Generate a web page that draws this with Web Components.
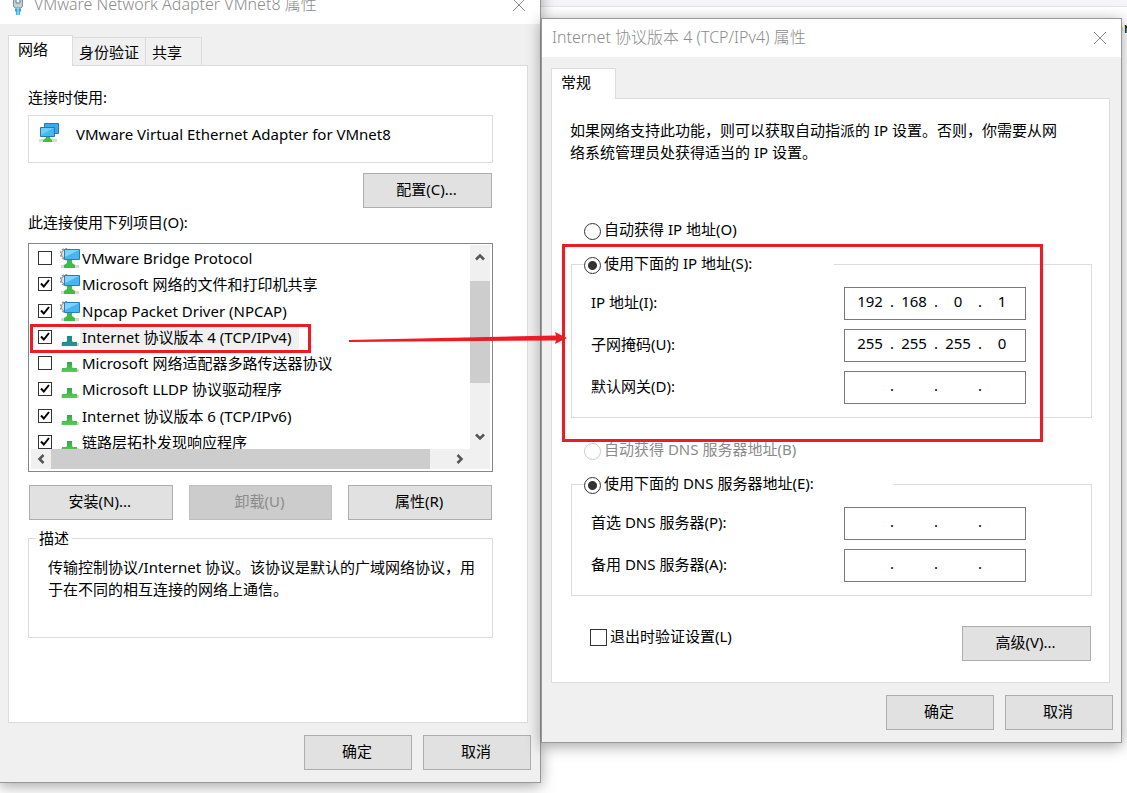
<!DOCTYPE html>
<html lang="zh-CN">
<head>
<meta charset="utf-8">
<title>Internet 协议版本 4 (TCP/IPv4) 属性</title>
<style>
  body {
    margin: 0;
    background: #fff;
    color: #000;
    font: 15px/22px "Noto Sans", "Noto Sans CJK SC", sans-serif;
  }
</style>
</head>
<body>
<desk-top>
  <dialog-window class="adapter" heading="VMware Network Adapter VMnet8 属性">
    <net-icon slot="icon" kind="plug"></net-icon>
    <tab-strip slot="tabs" tabs="网络,身份验证,共享"></tab-strip>
    <adapter-page></adapter-page>
    <push-button slot="footer">确定</push-button>
    <push-button slot="footer">取消</push-button>
  </dialog-window>

  <dialog-window class="protocol" heading="Internet 协议版本 4 (TCP/IPv4) 属性">
    <tab-strip slot="tabs" tabs="常规"></tab-strip>
    <protocol-page></protocol-page>
    <push-button slot="footer">确定</push-button>
    <push-button slot="footer">取消</push-button>
  </dialog-window>

  <mark-box slot="marks" class="item"></mark-box>
  <mark-box slot="marks" class="address"></mark-box>
  <mark-arrow slot="marks"></mark-arrow>
</desk-top>

<script>
{
  /** Registers an element whose shadow root is filled from a template. */
  const define = (name, html, setup) => {
    const template = document.createElement("template");
    template.innerHTML = html;

    window.customElements.define(name, class extends HTMLElement {
      constructor () {
        super();
        this.attachShadow({ mode: "open" });
        this.shadowRoot.appendChild(template.content.cloneNode(true));
      }

      connectedCallback () {
        if (setup && !this.ready) {
          this.ready = true;
          setup(this, this.shadowRoot);
        }
      }
    });
  };



  define("desk-top", `
    <style>
      :host {
        display: block;
        position: relative;
        min-height: 100vh;
        overflow: hidden;
      }

      .bar {
        position: absolute;
        inset: 0 0 auto 0;
        height: 6px;
        background: #f4f5f8;
        border-bottom: 1px solid #e5e5e5;
      }

      .windows {
        display: grid;
        grid-template-columns: 542fr 581fr;
        align-items: start;
        margin: 0 5px 0 -1px;
      }

      .code {
        position: absolute;
        font-family: "Liberation Mono", monospace;
        left: calc(100% - 13px);
        top: 19px;
      }

      ::slotted(.adapter) {
        margin-top: -15px;
        --body-padding: 11px 12px 12px 8px;
        --page-padding: 20px 34px 84px 19px;
      }

      ::slotted(.protocol) {
        margin-top: 18px;
      }

      ::slotted(.item) {
        left: 30px;
        top: 324px;
        width: 281px;
        height: 29px;
      }

      ::slotted(.address) {
        left: 562px;
        top: 244px;
        width: 481px;
        height: 198px;
      }

      ::slotted(mark-arrow) {
        left: 348px;
        top: 330px;
      }
    </style>
    <div class="bar"></div>
    <span class="code">or</span>
    <div class="windows"><slot></slot></div>
    <slot name="marks"></slot>
  `);



  define("dialog-window", `
    <style>
      :host {
        display: block;
        position: relative;
        background: #f0f0f0;
        border: 1px solid #989898;
        box-shadow: 0 3px 14px rgba(0, 0, 0, 0.36);
      }

      header {
        display: flex;
        align-items: center;
        gap: 8px;
        height: 38px;
        padding: 0 14px 0 10px;
        background: #fff;
        color: #8c8c8c;
      }

      h1 {
        flex: 1;
        margin: 0;
        padding-bottom: 2px;
        font-size: 16px;
        font-weight: 300;
      }

      header button {
        display: flex;
        padding: 0;
        border: 0;
        background: none;
      }

      header svg {
        width: 14px;
        height: 14px;
      }

      .body {
        padding: var(--body-padding, 11px 11px 12px 9px);
      }

      .page {
        padding: var(--page-padding, 20px 17px 21px 18px);
        border: 1px solid #dcdcdc;
        background: #fff;
      }

      footer {
        display: flex;
        justify-content: flex-end;
        gap: 11px;
        margin-top: 12px;
        margin-right: -3px;
        --button-width: 108px;
      }
    </style>
    <header>
      <slot name="icon"></slot>
      <h1></h1>
      <button type="button" aria-label="关闭">
        <svg viewBox="0 0 14 14"><path d="M1 1L13 13M13 1L1 13" stroke="#8a8a8a"/></svg>
      </button>
    </header>
    <div class="body">
      <slot name="tabs"></slot>
      <div class="page"><slot></slot></div>
      <footer><slot name="footer"></slot></footer>
    </div>
  `, (host, root) => {
    root.querySelector("h1").textContent = host.getAttribute("heading");
  });



  define("tab-strip", `
    <style>
      :host {
        display: flex;
        align-items: flex-end;
        height: 30px;
      }

      button {
        height: 28px;
        padding: 0 19px 0 6px;
        border: 1px solid #dcdcdc;
        border-width: 1px 1px 0 0;
        background: #f0f0f0;
        color: inherit;
        font: inherit;
      }

      button:nth-of-type(2) {
        padding-right: 6px;
      }

      button[aria-selected="true"] {
        position: relative;
        height: 31px;
        margin-bottom: -1px;
        padding: 0 24px 4px 9px;
        border-left-width: 1px;
        background: #fff;
      }
    </style>
  `, (host, root) => {
    host.setAttribute("role", "tablist");
    host.getAttribute("tabs").split(",").forEach((text, i) => {
      const tab = document.createElement("button");
      tab.type = "button";
      tab.setAttribute("role", "tab");
      tab.setAttribute("aria-selected", i === 0 ? "true" : "false");
      tab.textContent = text;
      root.appendChild(tab);
    });
  });



  define("push-button", `
    <style>
      :host {
        display: block;
        width: var(--button-width, auto);
      }

      button {
        display: block;
        width: 100%;
        height: 35px;
        padding: 0 2px 4px 0;
        border: 1px solid #adadad;
        background: #e1e1e1;
        color: #000;
        font: inherit;
      }

      button:disabled {
        border-color: #bfbfbf;
        background: #ccc;
        color: #8b8b8b;
      }
    </style>
    <button type="button"><slot></slot></button>
  `, (host, root) => {
    root.querySelector("button").disabled = host.hasAttribute("disabled");
  });



  const stand = (id, top, bottom) => `
    <svg viewBox="0 0 20 20">
      <defs><linearGradient id="${id}" x2="0" y2="1"><stop stop-color="${top}"/><stop offset="1" stop-color="${bottom}"/></linearGradient></defs>
      <path d="M1 16H19V19H1Z" fill="#d3d8d3"/>
      <path d="M7 9H12V14L13 15H17V19H2V15H6L7 14Z" fill="url(#${id})"/>
      <path d="M2 18H17V19H2Z" fill="${bottom}"/>
    </svg>`;

  const icons = {
    stand: stand("s", "#36a546", "#57cc55"),
    selected: stand("t", "#1b8a86", "#2b8f9c"),
    client: `
      <svg viewBox="0 0 20 20">
        <circle cx="6" cy="6" r="4.5" fill="#dfe3e6" stroke="#8e969c" stroke-width="1"/>
        <circle cx="6" cy="6" r="5.5" fill="none" stroke="#8e969c" stroke-width="1.5" stroke-dasharray="2 1.5"/>
        <path d="M1 17H19V20H1Z" fill="#d3d8d3"/>
        <path d="M7 11H12V15L15 17V20H4V17L7 15Z" fill="#3fbb4c"/>
        <path d="M4.500 1.500H19.500V11.500H4.500Z" fill="#45b5f3" stroke="#287fb8"/>
        <path d="M5 2H19L5 9Z" fill="#80d2fb"/>
      </svg>`,
    adapter: `
      <svg viewBox="0 0 20 20">
        <path d="M0 16H18V19H0Z" fill="#d8dcd8"/>
        <path d="M7 13H11V15L13 17V19H4V17L7 15Z" fill="#42bf45"/>
        <path d="M5.500 0.500H19.500V10.500H5.500Z" fill="#3daaf0" stroke="#2879ad"/>
        <path d="M1.500 4.500H15.500V13.500H1.500Z" fill="#45b7f6" stroke="#2879ad"/>
        <path d="M2 5H15L2 12Z" fill="#6fcbfb"/>
      </svg>`,
    plug: `
      <svg viewBox="0 0 16 20">
        <path d="M3.500 0V11L5 13H11L12.500 11V0" fill="#c4d0da" stroke="#7d8d9b"/>
        <path d="M6 3H10V8H6Z" fill="#eef4f8" stroke="#667b8d"/>
        <path d="M5 13.500H11V16.500H5Z" fill="#28a6e0"/>
        <path d="M6 16H10V20H6Z" fill="#39b4ea"/>
        <path d="M8 13V20" stroke="#bfe8fb"/>
      </svg>`
  };

  define("net-icon", `
    <style>
      :host {
        display: block;
        flex: none;
      }

      svg {
        display: block;
        height: 20px;
      }
    </style>
  `, (host, root) => {
    root.innerHTML += icons[host.getAttribute("kind")];
  });



  define("check-option", `
    <style>
      :host {
        display: block;
      }

      label {
        display: flex;
        align-items: center;
        gap: var(--check-gap, 3px);
        width: max-content;
        height: 22px;
        white-space: nowrap;
      }

      .text {
        padding-bottom: var(--check-lift, 3px);
      }

      input {
        appearance: none;
        box-sizing: border-box;
        flex: none;
        width: var(--check-size, 17px);
        height: var(--check-size, 17px);
        margin: 0;
        border: 1px solid #333;
        background: #fff center / 100% no-repeat;
      }

      input:checked {
        background-image: url("data:image/svg+xml,%3Csvg xmlns='http://www.w3.org/2000/svg' viewBox='0 0 12 12'%3E%3Cpath d='M2 5.500L4.800 8.500L10 2' fill='none' stroke='%23000' stroke-width='2'/%3E%3C/svg%3E");
      }

      input[type="radio"] {
        margin-top: 2px;
        border-radius: 50%;
      }

      input[type="radio"]:checked {
        background-image: radial-gradient(circle, #333 4px, transparent 5px);
      }

      :host([disabled]) label {
        color: #8b8b8b;
      }

      :host([disabled]) input {
        border-color: #ccc;
      }
    </style>
    <label><input><span class="text"><slot></slot></span></label>
  `, (host, root) => {
    const input = root.querySelector("input");
    input.type = host.getAttribute("type") ?? "checkbox";
    input.checked = host.hasAttribute("checked");
    input.disabled = host.hasAttribute("disabled");

    // radios sit in separate shadow roots, so the group is kept by hand
    input.addEventListener("change", () => {
      if (input.type !== "radio") return;
      host.getRootNode().querySelectorAll(`check-option[group="${host.getAttribute("group")}"]`).forEach(other => {
        if (other !== host) other.shadowRoot.querySelector("input").checked = false;
      });
    });
  });



  define("group-box", `
    <style>
      :host {
        display: block;
      }

      fieldset {
        min-width: 0;
        margin: 0;
        padding: 0;
        border: 1px solid #dcdcdc;
      }

      legend {
        box-sizing: border-box;
        width: var(--legend-width, auto);
        margin-left: var(--legend-indent, 12px);
        padding: 0 var(--legend-padding, 0);
      }
    </style>
    <fieldset>
      <legend><slot name="legend"></slot></legend>
      <slot></slot>
    </fieldset>
  `);



  define("ip-field", `
    <style>
      :host {
        display: flex;
        align-items: center;
        justify-content: space-between;
      }

      label {
        padding-bottom: 3px;
      }

      .box {
        display: flex;
        box-sizing: border-box;
        width: 182px;
        height: 33px;
        padding: 0 5px 6px 7px;
        border: 1px solid #7a7a7a;
        background: #fff;
        align-items: center;
      }

      input {
        flex: 1;
        min-width: 0;
        height: 22px;
        padding: 0;
        border: 0;
        outline: 0;
        background: none;
        color: inherit;
        font: inherit;
        text-align: center;
      }

      span {
        width: 8px;
        text-align: center;
      }
    </style>
    <label for="part0"></label>
    <div class="box"></div>
  `, (host, root) => {
    const name = host.getAttribute("label");
    const parts = (host.getAttribute("value") ?? "...").split(".");
    const box = root.querySelector(".box");

    root.querySelector("label").textContent = name;
    parts.forEach((part, i) => {
      if (i > 0) {
        const dot = document.createElement("span");
        dot.textContent = ".";
        box.appendChild(dot);
      }
      const input = document.createElement("input");
      input.id = "part" + i;
      input.maxLength = 3;
      input.value = part;
      if (i > 0) input.setAttribute("aria-label", `${name} ${i + 1}`);
      box.appendChild(input);
    });
  });



  define("scroll-bar", `
    <style>
      :host {
        display: flex;
        background: #f0f0f0;
      }

      :host([vertical]) {
        flex-direction: column;
      }

      button {
        display: flex;
        flex: 0 0 20px;
        align-items: center;
        justify-content: center;
        padding: 0;
        border: 0;
        background: none;
      }

      :host([vertical]) button {
        flex-basis: 24px;
      }

      svg {
        width: 12px;
        height: 12px;
        transform: rotate(-90deg);
      }

      button:last-child svg {
        transform: rotate(90deg);
      }

      :host([vertical]) svg {
        transform: none;
      }

      :host([vertical]) button:last-child svg {
        transform: rotate(180deg);
      }

      .track {
        display: flex;
        flex: 1;
      }

      .thumb {
        width: 95%;
        background: #cdcdcd;
      }

      :host([vertical]) .track {
        flex-direction: column;
        padding-top: 12px;
      }

      :host([vertical]) .thumb {
        width: 100%;
        height: 71%;
      }
    </style>
    <button type="button" aria-label="向前滚动"><svg viewBox="0 0 12 12"><path d="M2 8.500L6 4.500L10 8.500" fill="none" stroke="#555" stroke-width="2.500"/></svg></button>
    <div class="track"><div class="thumb"></div></div>
    <button type="button" aria-label="向后滚动"><svg viewBox="0 0 12 12"><path d="M2 8.500L6 4.500L10 8.500" fill="none" stroke="#555" stroke-width="2.500"/></svg></button>
  `);



  const items = [
    ["VMware Bridge Protocol", "client", false],
    ["Microsoft 网络的文件和打印机共享", "client", true],
    ["Npcap Packet Driver (NPCAP)", "client", true],
    ["Internet 协议版本 4 (TCP/IPv4)", "selected", true],
    ["Microsoft 网络适配器多路传送器协议", "stand", false],
    ["Microsoft LLDP 协议驱动程序", "stand", true],
    ["Internet 协议版本 6 (TCP/IPv6)", "stand", true],
    ["链路层拓扑发现响应程序", "stand", true]
  ];

  define("item-list", `
    <style>
      :host {
        display: grid;
        grid-template: 204px 20px / 1fr 20px;
        padding: 1px 2px 2px;
        border: 1px solid #828790;
        background: #fff;
      }

      .view {
        overflow: hidden;
      }

      .rows {
        display: grid;
        grid-auto-rows: 1fr;
        height: 210px;
        padding-left: 7px;
      }

      check-option {
        align-self: center;
        --check-size: 14px;
        --check-gap: 8px;
        --check-lift: 0;
      }

      .item {
        display: flex;
        align-items: center;
      }

      .name {
        padding: 0 8px 0 2px;
        line-height: 24px;
      }

      .selected .name {
        background: #f0f0f0;
      }

      .corner {
        background: #f0f0f0;
      }
    </style>
    <div class="view"><div class="rows"></div></div>
    <scroll-bar vertical></scroll-bar>
    <scroll-bar></scroll-bar>
    <div class="corner"></div>
  `, (host, root) => {
    root.querySelector(".rows").innerHTML = items.map(([name, kind, checked]) => `
      <check-option ${checked ? "checked" : ""}>
        <span class="item ${kind}"><net-icon kind="${kind}"></net-icon><span class="name">${name}</span></span>
      </check-option>`).join("");
  });



  define("adapter-page", `
    <style>
      :host {
        display: block;
      }

      p {
        margin: 0;
      }

      .device {
        display: flex;
        align-items: flex-start;
        gap: 17px;
        box-sizing: border-box;
        height: 48px;
        margin: 7px 0 10px;
        padding: 7px 10px;
        border: 1px solid #dcdcdc;
      }

      .configure {
        display: flex;
        justify-content: flex-end;
        margin: 0 1px 3px;
        --button-width: 129px;
      }

      item-list {
        margin-top: 10px;
      }

      .actions {
        display: grid;
        grid-template-columns: repeat(3, 1fr);
        gap: 16px;
        margin: 13px 1px 7px;
      }

      group-box {
        --legend-indent: 7px;
        --legend-padding: 3px;
      }

      .description {
        padding: 7px 0 37px 19px;
        white-space: nowrap;
      }
    </style>
    <p>连接时使用:</p>
    <div class="device">
      <net-icon kind="adapter"></net-icon>
      <span>VMware Virtual Ethernet Adapter for VMnet8</span>
    </div>
    <div class="configure"><push-button>配置(C)...</push-button></div>
    <p>此连接使用下列项目(O):</p>
    <item-list></item-list>
    <div class="actions">
      <push-button>安装(N)...</push-button>
      <push-button disabled>卸载(U)</push-button>
      <push-button>属性(R)</push-button>
    </div>
    <group-box>
      <span slot="legend">描述</span>
      <p class="description">传输控制协议/Internet 协议。该协议是默认的广域网络协议，用<br>于在不同的相互连接的网络上通信。</p>
    </group-box>
  `);



  define("protocol-page", `
    <style>
      :host {
        display: block;
      }

      p {
        margin: 0 0 56px;
        white-space: nowrap;
      }

      .auto {
        margin: 0 0 12px 14px;
      }

      group-box {
        margin-left: 1px;
      }

      .address {
        margin-bottom: 21px;
        --legend-width: 250px;
      }

      .dns {
        --legend-width: 309px;
      }

      .fields {
        display: grid;
        gap: 9px;
        padding: 12px 65px 13px 19px;
      }

      .end {
        display: flex;
        align-items: flex-start;
        justify-content: space-between;
        margin-top: 30px;
        padding: 0 1px 0 20px;
        --button-width: 129px;
      }
    </style>
    <p>如果网络支持此功能，则可以获取自动指派的 IP 设置。否则，你需要从网<br>络系统管理员处获得适当的 IP 设置。</p>
    <check-option class="auto" type="radio" group="ip">自动获得 IP 地址(O)</check-option>
    <group-box class="address">
      <check-option slot="legend" type="radio" group="ip" checked>使用下面的 IP 地址(S):</check-option>
      <div class="fields">
        <ip-field label="IP 地址(I):" value="192.168.0.1"></ip-field>
        <ip-field label="子网掩码(U):" value="255.255.255.0"></ip-field>
        <ip-field label="默认网关(D):"></ip-field>
      </div>
    </group-box>
    <check-option class="auto" type="radio" group="dns" disabled>自动获得 DNS 服务器地址(B)</check-option>
    <group-box class="dns">
      <check-option slot="legend" type="radio" group="dns" checked>使用下面的 DNS 服务器地址(E):</check-option>
      <div class="fields">
        <ip-field label="首选 DNS 服务器(P):"></ip-field>
        <ip-field label="备用 DNS 服务器(A):"></ip-field>
      </div>
    </group-box>
    <div class="end">
      <check-option>退出时验证设置(L)</check-option>
      <push-button>高级(V)...</push-button>
    </div>
  `);



  define("mark-box", `
    <style>
      :host {
        position: absolute;
        box-sizing: border-box;
        border: 3px solid #ed1c24;
        pointer-events: none;
      }
    </style>
  `);



  define("mark-arrow", `
    <style>
      :host {
        position: absolute;
        pointer-events: none;
      }

      svg {
        display: block;
        width: 220px;
        height: 16px;
      }
    </style>
    <svg viewBox="0 0 220 16"><path d="M1 10L208 5.500L207 2L219 8L207 14L208 10.500L1 12Z" fill="#ed1c24"/></svg>
  `);
}
</script>
</body>
</html>
